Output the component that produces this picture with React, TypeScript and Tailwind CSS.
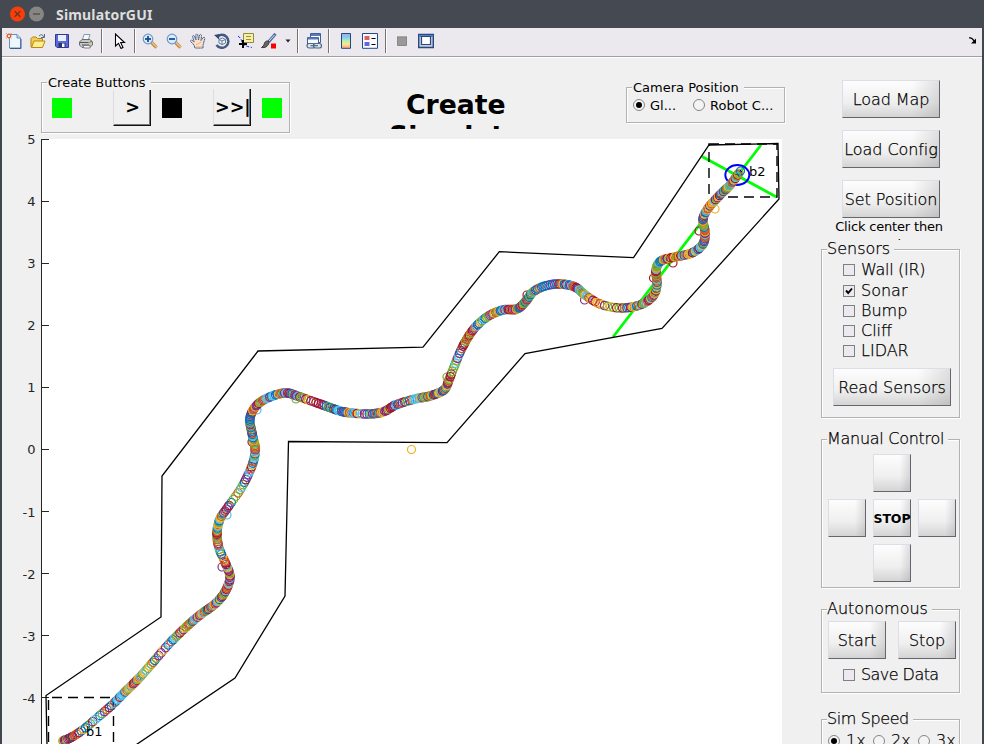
import React from 'react';

const PALETTE = ['#0072bd', '#d95319', '#edb120', '#7e2f8e', '#77ac30', '#4dbeee', '#a2142f'];

// x, y, spacing between neighbouring markers
const TRACK: number[][] = [
  [63, 741, 1.2], [72, 737, 2.6], [84, 729, 3.2], [97, 718, 3], [112, 705, 1.8], [125, 692, 1.5], [140, 677, 2.6],
  [155, 660, 3.6], [168, 645, 2.4], [184, 629, 1.6], [200, 615, 1.5], [215, 604, 1.4], [225, 592, 1.4], [230, 577, 1.7],
  [225, 562, 2.6], [219, 548, 1.8], [217, 533, 1.5], [220, 519, 2.2], [228, 507, 3.8], [240, 490, 2.8], [249, 473, 1.9],
  [254, 459, 1.4], [255, 447, 1.6], [252, 433, 1.7], [250, 418, 1.5], [257, 405, 1.8], [270, 397, 1.5], [286, 393, 1.6],
  [300, 397, 2.6], [320, 404, 1.8], [340, 411, 1.4], [352, 413, 2.4], [368, 414, 1.8], [383, 412, 1.6], [396, 405, 2.3],
  [415, 399, 1.5], [430, 396, 1.4], [444, 390, 1.6], [449, 380, 3], [454, 367, 2.6], [462, 348, 1.8], [473, 330, 2],
  [487, 317, 1.6], [503, 310, 1.5], [517, 309, 1.2], [526, 301, 1.6], [533, 292, 2.2], [545, 286, 2.2], [560, 284, 1.5],
  [575, 287, 1.5], [585, 295, 2.4], [600, 304, 3], [620, 308, 2], [640, 305, 1.5], [653, 296, 1.5], [657, 284, 1.3],
  [656, 270, 1.2], [661, 261, 1.8], [675, 257, 1.5], [692, 253, 1.5], [703, 244, 1.4], [705, 232, 1.5], [703, 219, 1.6],
  [709, 207, 1.4], [720, 195, 1.4], [731, 184, 1.4], [739, 173, 1.4],
];

const STRAYS: [number, number, number][] = [
  [411.5, 449.5, 2], [715, 209, 2], [699, 231, 6], [673, 263, 6], [653.5, 278, 6], [584.5, 300, 3], [447, 377, 4],
  [296, 399, 4], [257, 410, 5], [252, 442, 6], [227, 515, 5], [222, 567, 3], [394, 405, 5], [515, 310, 1], [527, 295, 6],
];

function markers() {
  const out: { x: number; y: number; c: string }[] = [];
  let seed = 7;
  let carry = 0;
  for (let i = 0; i < TRACK.length - 1; i++) {
    const a = TRACK[Math.max(0, i - 1)];
    const b = TRACK[i];
    const c = TRACK[i + 1];
    const d = TRACK[Math.min(TRACK.length - 1, i + 2)];
    const len = Math.hypot(c[0] - b[0], c[1] - b[1]);
    while (carry < len) {
      const t = carry / len;
      const at = (k: number) =>
        0.5 * (2 * b[k] + (c[k] - a[k]) * t + (2 * a[k] - 5 * b[k] + 4 * c[k] - d[k]) * t * t +
          (3 * b[k] - a[k] - 3 * c[k] + d[k]) * t * t * t);
      seed = (seed * 1103515245 + 12345) % 2147483648;
      out.push({ x: at(0), y: at(1), c: PALETTE[Math.floor((seed / 2147483648) * 7)] });
      carry += b[2];
    }
    carry -= len;
  }
  return out;
}

const DOTS = markers();
const TICKS: [number, number][] = [[5, 139.5], [4, 201.5], [3, 263.5], [2, 325.5], [1, 387.5], [0, 449.5], [-1, 512], [-2, 574], [-3, 636], [-4, 698]];

function Plot() {
  return (
    <svg width="800" height="610" viewBox="2 134 800 610" className="block" fontFamily="DejaVu Sans, sans-serif" fontSize="13">
      <rect x="42" y="139" width="740" height="606" fill="#fff" />
      <path d="M41.5 139V744" stroke="#262626" />
      {TICKS.map(([n, y]) => (
        <g key={n}>
          <path d={`M41 ${Math.floor(y) - (n < 0 ? 0.5 : -0.5)}h8`} stroke="#262626" />
          <text x="35.5" y={y + 4.9} textAnchor="end" fill="#262626">{n}</text>
        </g>
      ))}
      <g fill="none" stroke="#00ff00" strokeWidth="2.8">
        <path d="M702 156.500L776.500 197M761 145L613 337" />
      </g>
      <path d="M47 746L46 695.500L161 617L162 476L258 351L423 347.200L499.300 251.700L633.500 257.700L709 145L778 143.500L779 199L662 328.500L525 353.500L447 442.700L288.500 441.500L285 596L235 678L135 745.500" fill="none" stroke="#000" strokeWidth="1.3" />
      <path d="M709 144H777V197H709Z" fill="none" stroke="#000" strokeWidth="1.4" strokeDasharray="10 6" />
      <path d="M48.500 750V697.500H113.500V750" fill="none" stroke="#000" strokeWidth="1.4" strokeDasharray="10 6" strokeDashoffset="8" />
      <ellipse cx="737.300" cy="175" rx="12" ry="10" fill="none" stroke="#00f" strokeWidth="1.9" />
      <g fill="none" strokeWidth="1.2">
        {STRAYS.map(([x, y, c], i) => <circle key={i} cx={x} cy={y} r="4" stroke={PALETTE[c]} />)}
      </g>
      <g fill="none" strokeWidth="1.2">
        {DOTS.map((d, i) => <circle key={i} cx={d.x} cy={d.y} r="4.2" stroke={d.c} />)}
        <circle cx="740.500" cy="171" r="4" stroke="#0072bd" />
      </g>
      <path d="M740 170l2 2" stroke="#00f" />
      <text x="749" y="176">b2</text>
      <text x="86" y="736">b1</text>
    </svg>
  );
}

function Group({ title, className, legend, children }: { title: string; className: string; legend: string; children: React.ReactNode }) {
  return (
    <fieldset className={`min-w-0 border border-[#b2b2b2] shadow-[inset_1px_1px_0_#fff,1px_1px_0_#fff] ${className}`}>
      <legend className={`relative bg-[#f0f0f0] whitespace-nowrap ${legend}`}>{title}</legend>
      {children}
    </fieldset>
  );
}

function Btn({ children, className }: { children?: React.ReactNode; className: string }) {
  return (
    <button className={`flex h-[38px] shrink-0 items-center justify-center whitespace-nowrap border border-t-[#dcdde6] border-l-[#dcdde6] border-r-[#656570] border-b-[#656570] bg-[linear-gradient(to_right,transparent_72%,rgba(120,120,120,0.22)),linear-gradient(to_bottom,#fdfdfd,#efefef_60%,#d4d4d4)] pt-[2px] tracking-[-0.08px] ${className}`}>
      {children}
    </button>
  );
}

function Check({ label, on = false, className = '' }: { label: string; on?: boolean; className?: string }) {
  return (
    <label className={`flex h-5 items-center gap-[6px] pl-[21px] whitespace-nowrap ${className}`}>
      <span className="flex size-3 items-center justify-center border border-[#808080] bg-[#ece9f0]">
        {on && <svg width="8" height="8" viewBox="0 0 8 8"><path d="M1 3.500L3.200 6L7 1.500" fill="none" stroke="#000" strokeWidth="1.9" /></svg>}
      </span>
      {label}
    </label>
  );
}

function Radio({ on = false }: { on?: boolean }) {
  return (
    <span className="flex size-3 shrink-0 items-center justify-center rounded-full border border-[#858585] bg-[#f4f4f4]">
      {on && <span className="size-[6px] rounded-full bg-black" />}
    </span>
  );
}

function Icon({ children, className = '' }: { children: React.ReactNode; className?: string }) {
  return <svg width="16" height="16" viewBox="0 0 16 16" fill="none" className={`shrink-0 ${className}`}>{children}</svg>;
}

function Sep({ className }: { className: string }) {
  return <span className={`h-6 w-[2px] shrink-0 border-l border-l-[#77746f] border-r border-r-white ${className}`} />;
}

function Zoom({ plus = false }: { plus?: boolean }) {
  return (
    <Icon className="mr-2">
      <path d="M9.500 9.500L14.500 14.500" stroke="#bd8648" strokeWidth="3.200" />
      <path d="M10 9.500L14.500 14" stroke="#f3c277" strokeWidth="1.500" />
      <circle cx="6" cy="6" r="4.800" fill="#d3edfa" stroke="#7398c6" strokeWidth="1.200" />
      <path d="M3 6H9" stroke="#1c4a92" strokeWidth="1.800" />
      {plus && <path d="M6 3V9" stroke="#1c4a92" strokeWidth="1.800" />}
    </Icon>
  );
}

function Toolbar() {
  return (
    <div className="flex h-[29px] shrink-0 items-center border-b border-b-[#a09fa5] bg-[#ebe9ed] pr-[5px] pb-[2px] pl-1">
      <Icon className="mr-2">
        <path d="M3.500 1.500H11L14.500 5V15H3.500Z" fill="#edf7fe" stroke="#6a8eb9" />
        <path d="M11 1.500V5H14.500" fill="#b9d8ec" stroke="#6a8eb9" />
        <path d="M15 6V15.500H4" stroke="#395f94" />
        <path d="M0 0L5.500 5.500M5.500 0L0 5.500M3 0V6M0 3H6" stroke="#e8845c" />
        <circle cx="3" cy="3" r="1.700" fill="#ffe6bc" stroke="#d75d35" />
      </Icon>
      <Icon className="mr-2">
        <path d="M1 13.500V5.500L2.500 4H6L7.500 5.500H12.500V14H1Z" fill="#f3ce55" stroke="#ad8517" />
        <path d="M1.500 14.500L4 8H15L12.500 14.500Z" fill="#ffec91" stroke="#b78a12" />
        <path d="M9 3Q12 0 14 4M14.500 1V4.500H11" stroke="#4d6d91" />
      </Icon>
      <Icon className="mr-2">
        <path d="M1.500 1.500H14.500V14.500H3L1.500 13Z" fill="#5b68d5" stroke="#303a96" />
        <path d="M4 2H12V8H4Z" fill="#e8f1ff" />
        <path d="M4.500 10H11.500V14H4.500Z" fill="#293270" />
        <path d="M8 10.500H10.500V14H8Z" fill="#fff" />
      </Icon>
      <Icon>
        <path d="M4 8L6 1.500H12L10 8Z" fill="#f2f9ff" stroke="#8499b2" />
        <path d="M1.500 9L4 6.500H12L14.500 9V12L11.500 14.500H4L1.500 12Z" fill="#c6c7c7" stroke="#6c6d70" />
        <path d="M2 9.500H11.500L14 8M4 12H11" stroke="#55575c" />
        <path d="M5 12.500H12V15H6Z" fill="#f9f9f9" stroke="#7d8085" />
        <path d="M10 10H13" stroke="#d6cd43" />
      </Icon>
      <Sep className="ml-[7px]" />
      <Icon className="ml-[10px]">
        <path d="M2.500 1V13L5.500 10.300L8 15.500L10 14.500L7.700 9.500H11.500Z" fill="#fff" stroke="#000" strokeWidth="1.100" />
      </Icon>
      <Sep className="mr-[6px] ml-[5px]" />
      <Zoom plus />
      <Zoom />
      <Icon className="mr-2">
        <path d="M5 15L4 12L.7 8.500Q.3 6.800 2 7.200L4.200 9L2.500 3.500Q3 1.800 4.300 3L6 7L5.800 1.800Q6.700.2 7.800 1.800L8.500 7L9.600 2Q11 .8 11.500 2.500L11 7.500L13.200 4.500Q15 3.800 14.800 5.700L13 12V15Z" fill="#ffdfc3" stroke="#3f659f" strokeDasharray="2.200 .3" />
        <path d="M6 12L11 9M6 14H12" stroke="#e1b18f" />
      </Icon>
      <Icon className="mr-2">
        <path d="M3 4A6.500 6.500 0 1 1 2.500 12" stroke="#445981" strokeWidth="2.500" />
        <path d="M0 2L5.500 1L5 6.500Z" fill="#344973" />
        <path d="M5 6.500L8.500 5L11.500 6.500V10L8 11.500L5 10ZM5 6.500L8 8L11.500 6.500M8 8V11.500" fill="#eff9fd" stroke="#637c9b" />
      </Icon>
      <Icon className="mr-[7px]">
        <path d="M0 3Q3 5 4 9T14 14.500" stroke="#1616ff" strokeDasharray="3 1.500" />
        <path d="M5.500.5H15.500V9.500H5.500Z" fill="#f7efa2" stroke="#928b3c" />
        <path d="M8 3.500H13M8 6.500H13" stroke="#96904f" />
        <path d="M5 7V15M1 11H9" stroke="#000" strokeWidth="2" />
      </Icon>
      <Icon>
        <path d="M14.500.8L7.500 9" stroke="#536ba1" strokeWidth="3" />
        <path d="M13.500 2L8 8" stroke="#cde0fb" />
        <path d="M7.500 8Q3.500 7.500 3 12L.5 14.500Q6 15.500 8 10Z" fill="#666" stroke="#3d3d3d" />
        <path d="M10 10.500H15V15.500H10Z" fill="#f00" />
      </Icon>
      <svg width="6" height="4" viewBox="0 0 6 4" className="ml-2 shrink-0"><path d="M.5.500H5.500L3 3.500Z" fill="#222" /></svg>
      <Sep className="mr-[7px] ml-[6px]" />
      <Icon>
        <path d="M4.500.5H14.500V9.500H4.500Z" fill="#fff" stroke="#3d5d9c" />
        <path d="M5 2H14" stroke="#5c79b6" strokeWidth="2" />
        <path d="M1.500 4.500H12.500V11H1.500Z" fill="#f7faff" stroke="#3d5d9c" />
        <path d="M2 5.500H12" stroke="#5c79b6" strokeWidth="2" />
        <rect x="1" y="10.500" width="8" height="4.500" rx="2.200" fill="#d9e5ee" stroke="#4b6887" strokeWidth="1.200" />
        <rect x="7.500" y="10.500" width="8" height="4.500" rx="2.200" fill="#d9e5ee" stroke="#4b6887" strokeWidth="1.200" />
        <path d="M4.500 12.700H12" stroke="#4b6887" strokeWidth="1.200" />
      </Icon>
      <Sep className="mr-2 ml-[6px]" />
      <Icon>
        <defs>
          <linearGradient id="jet" x1="0" y1="0" x2="0" y2="1">
            <stop stopColor="#baa3e5" /><stop offset=".25" stopColor="#7bcff0" /><stop offset=".5" stopColor="#b7efb1" />
            <stop offset=".72" stopColor="#ffe58b" /><stop offset="1" stopColor="#f9a485" />
          </linearGradient>
        </defs>
        <path d="M3.500.5H12.500V15.300H3.500Z" fill="url(#jet)" stroke="#254887" />
      </Icon>
      <Icon className="ml-2">
        <path d="M.5.500H15.500V15.300H.5Z" fill="#fbfbff" stroke="#254887" />
        <path d="M2.500 3H7.500V7H2.500Z" fill="#e05e60" /><path d="M2.500 9H7.500V13H2.500Z" fill="#6168df" />
        <path d="M9.500 5.500H13.500M9.500 11.500H13.500" stroke="#000" />
      </Icon>
      <Sep className="ml-[7px]" />
      <Icon className="ml-[7px]"><path d="M3.500 4V12.500H12.500V4Z" fill="#999" stroke="#888" /><path d="M3 3.500H13" stroke="#aaa" /></Icon>
      <Icon className="ml-2">
        <path d="M.7 1.500H15.300V14.500H.7Z" fill="#ccc" stroke="#254887" strokeWidth="1.400" />
        <path d="M1 3H15" stroke="#5d7eb8" strokeWidth="2" />
        <path d="M3.500 3.500H12.500V11.500H3.500Z" fill="#fff" stroke="#254887" strokeWidth="1.200" />
      </Icon>
      <svg width="8" height="8" viewBox="0 0 8 8" className="mr-0 ml-auto shrink-0"><path d="M0 1Q3 0 5 4" fill="none" stroke="#000" strokeWidth="1.300" /><path d="M7 1.500V6.500H2Z" fill="#000" /></svg>
    </div>
  );
}

function OldButton({ children }: { children: string }) {
  return (
    <button className="-mt-px h-[37px] w-[38px] shrink-0 border-l border-l-[#ddd] border-r border-r-[#111] border-b border-b-[#111] pl-px shadow-[inset_-1px_-1px_0_#777] text-[17.5px] leading-[36px] font-bold whitespace-nowrap">
      {children}
    </button>
  );
}

export default function App() {
  return (
    <div className="flex h-[744px] w-[984px] flex-col overflow-hidden bg-[#424650] font-['DejaVu_Sans',sans-serif] text-black">
      <header className="flex h-7 shrink-0 items-center bg-[#454a52] pl-[10px]">
        <svg width="36" height="16" viewBox="0 0 36 16" className="shrink-0">
          <circle cx="7.500" cy="8" r="7.500" fill="#fb3e08" /><path d="M4.700 5.200L10.300 10.800M10.300 5.200L4.700 10.800" stroke="#5c3a2b" strokeWidth="1.300" />
          <circle cx="26.500" cy="8" r="7.500" fill="#878683" /><path d="M23 8H30" stroke="#46484b" strokeWidth="1.200" />
        </svg>
        <h1 className="ml-[10px] pt-[2px] font-['Noto_Sans',sans-serif] text-[14px] leading-[26px] font-bold tracking-[0.17px] text-[#dedede]">SimulatorGUI</h1>
      </header>
      <div className="mr-[2px] ml-[2px] flex min-h-0 flex-1 flex-col bg-[#f0f0f0]">
        <Toolbar />
        <main className="flex min-h-0 flex-1 border-t border-t-white">
          <section className="w-[800px] shrink-0">
            <div className="flex h-[76px] items-start text-[13px]">
              <Group title="Create Buttons" className="mt-[16px] ml-[39px] h-[59px] w-[249px] shrink-0" legend="ml-[5px] h-4 leading-[18px] pr-[5px] pl-[1px]">
                <div className="flex h-[35px] items-center pl-[10px]">
                  <span className="size-5 bg-[#00ff00]" />
                  <span className="w-[41px]" />
                  <OldButton>&gt;</OldButton>
                  <span className="ml-[11px] size-5 bg-black" />
                  <span className="w-[31px]" />
                  <OldButton>&gt;&gt;|</OldButton>
                  <span className="ml-[11px] size-5 bg-[#00ff00]" />
                </div>
              </Group>
              <h2 className="mt-[31px] ml-[91px] h-[40px] w-[160px] shrink-0 overflow-hidden text-[26.7px] leading-[31px] font-bold">
                <span className="block pl-[25px]">Create</span>
                <span className="block pl-[8px]">Simulator</span>
              </h2>
              <Group title="Camera Position" className="mt-[21px] ml-[85px] h-[44px] w-[159px] shrink-0" legend="ml-[5px] h-4 leading-[18px] pr-[5px] pl-[1px]">
                <div className="flex h-5 items-center pl-[6px]">
                  <Radio on /><span className="ml-[5px] w-[43px] pt-px">Gl...</span><Radio /><span className="ml-[5px] pt-px">Robot C...</span>
                </div>
              </Group>
            </div>
            <Plot />
          </section>
          <aside className="flex flex-1 flex-col pl-[19px] text-[16px] font-extralight [-webkit-text-stroke:0.25px_#000]">
            <div className="ml-[21px] flex w-[98px] shrink-0 flex-col gap-3 pt-[22px]">
              <Btn className="w-[98px]">Load Map</Btn>
              <Btn className="w-[98px]">Load Config</Btn>
              <Btn className="w-[98px]">Set Position</Btn>
            </div>
            <p className="h-[22px] w-[136px] shrink-0 overflow-hidden text-center text-[13px] leading-[18px] font-normal tracking-[-0.17px] whitespace-nowrap [-webkit-text-stroke:0px]">Click center then<br />direction</p>
            <Group title="Sensors" className="-mt-px h-[179px] w-[139px] shrink-0" legend="ml-[5px] h-5 leading-5 pr-1">
              <Check label="Wall (IR)" className="mt-px tracking-[-0.3px]" />
              <Check label="Sonar" on className="mt-px" />
              <Check label="Bump" />
              <Check label="Cliff" />
              <Check label="LIDAR" />
              <Btn className="mt-[7px] ml-[11px] w-[118px]">Read Sensors</Btn>
            </Group>
            <Group title="Manual Control" className="mt-[11px] h-[159px] w-[139px] shrink-0" legend="ml-[5px] h-5 leading-5 pr-1 tracking-[-0.28px]">
              <div className="ml-[6px] grid w-[128px] grid-cols-3 gap-[7px] pt-[5px]">
                <Btn className="col-start-2 w-[38px]" />
                <Btn className="col-start-1 w-[38px]" />
                <Btn className="w-[38px] text-[12.5px] font-bold [-webkit-text-stroke:0px]">STOP</Btn>
                <Btn className="w-[38px]" />
                <Btn className="col-start-2 w-[38px]" />
              </div>
            </Group>
            <Group title="Autonomous" className="mt-[11px] h-[94px] w-[139px] shrink-0" legend="ml-[5px] h-5 leading-5 pr-1">
              <div className="ml-[6px] flex gap-3 pt-[2px]">
                <Btn className="w-[58px]">Start</Btn>
                <Btn className="w-[58px]">Stop</Btn>
              </div>
              <Check label="Save Data" className="mt-[6px] tracking-[-0.55px]" />
            </Group>
            <Group title="Sim Speed" className="mt-[16px] h-[80px] w-[139px] shrink-0" legend="ml-[5px] h-5 leading-5 pr-1 tracking-[-0.4px]">
              <div className="ml-[6px] grid h-5 grid-cols-[45px_45px_45px] items-center">
                <span className="flex items-center gap-[6px]"><Radio on />1x</span>
                <span className="flex items-center gap-[6px]"><Radio />2x</span>
                <span className="flex items-center gap-[6px]"><Radio />3x</span>
              </div>
            </Group>
          </aside>
        </main>
      </div>
    </div>
  );
}
